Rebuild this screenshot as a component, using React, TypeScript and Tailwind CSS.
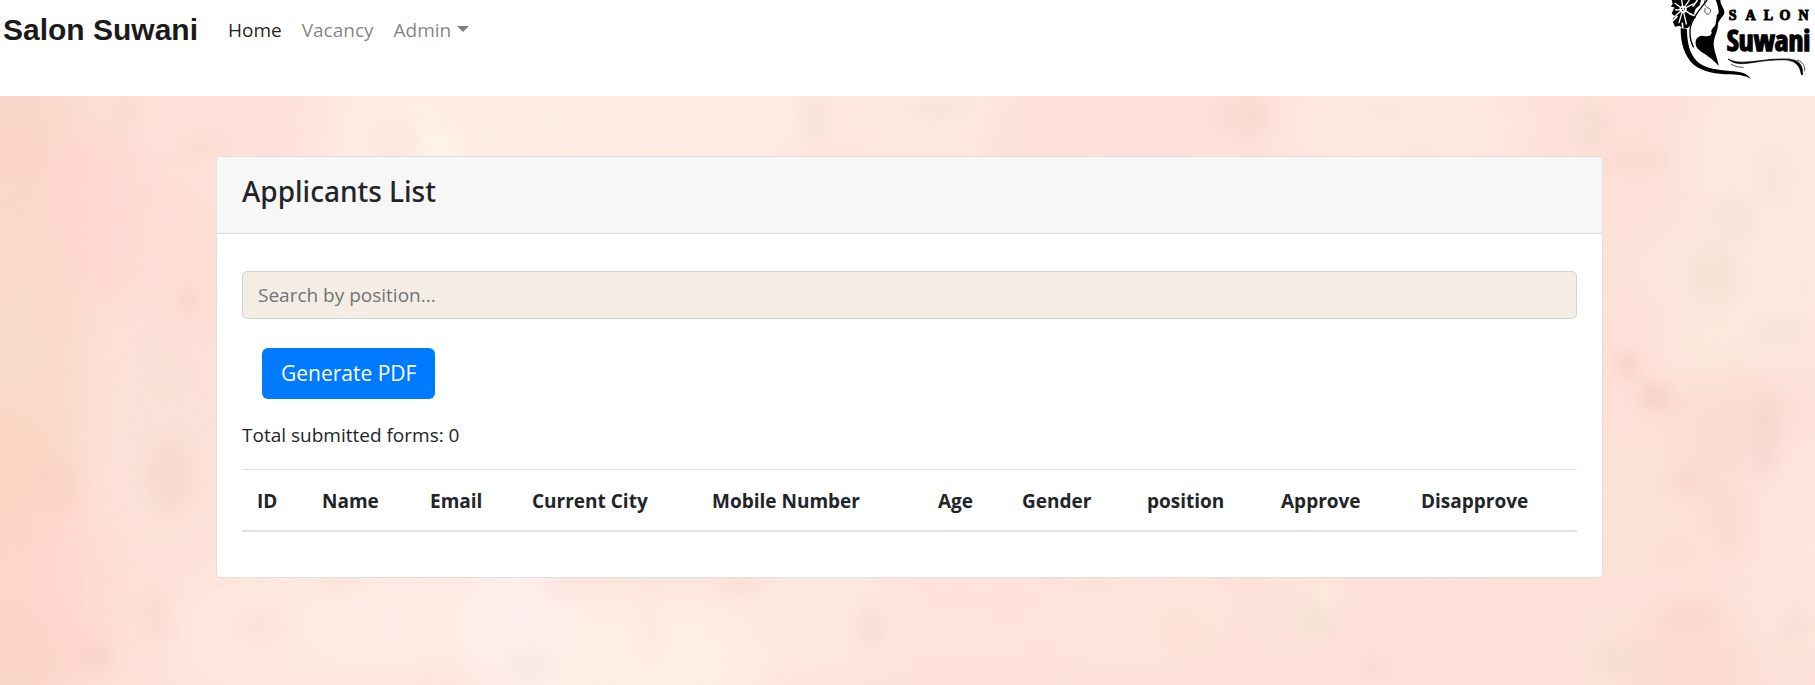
type Blob = [x: number, y: number, rx: number, ry: number, color: string, opacity: number];

const washes: Blob[] = [
  [0, 180, 90, 420, '#fad3c4', 0.7],
  [20, 260, 60, 130, '#fbd9c9', 0.9],
  [10, 400, 50, 90, '#fbd5c1', 0.8],
  [105, 120, 50, 90, '#ffd6d1', 0.8],
  [180, 180, 60, 120, '#ffdbd4', 0.7],
  [160, 330, 60, 120, '#fbe0d6', 0.9],
  [60, 500, 60, 100, '#ffd7d0', 0.8],
  [10, 570, 60, 60, '#f9d3c7', 0.8],
  [440, 40, 150, 70, '#ffefe6', 0.9],
  [640, 20, 190, 90, '#feece3', 0.9],
  [270, 30, 70, 60, '#ffe0db', 0.8],
  [920, 20, 90, 60, '#feeae0', 0.9],
  [1160, 30, 100, 60, '#ffdfda', 0.8],
  [1400, 30, 120, 60, '#feebe0', 0.9],
  [1640, 60, 60, 90, '#fddfd6', 0.8],
  [1770, 60, 90, 90, '#fdeae0', 0.9],
  [1720, 200, 90, 80, '#fbe8dd', 0.9],
  [1790, 150, 60, 140, '#fce9e0', 0.8],
  [1640, 320, 50, 130, '#ffded8', 0.8],
  [1720, 260, 60, 40, '#fce9dc', 0.9],
  [1740, 350, 90, 80, '#fbdbd2', 0.8],
  [1640, 400, 50, 80, '#fde2d7', 0.8],
  [1800, 420, 50, 90, '#ffe5e0', 0.9],
  [300, 540, 130, 80, '#fee9e0', 0.9],
  [420, 520, 120, 60, '#ffeee6', 0.8],
  [530, 540, 60, 90, '#fff0f0', 0.9],
  [660, 560, 120, 70, '#ffefe6', 0.9],
  [820, 520, 90, 60, '#fdeae1', 0.9],
  [980, 540, 110, 70, '#ffe3dc', 0.8],
  [1140, 510, 90, 50, '#fee6db', 0.9],
  [1320, 520, 50, 50, '#fbe7dc', 0.9],
  [1440, 550, 150, 70, '#ffe0d9', 0.8],
  [1620, 560, 50, 40, '#f9e3d7', 0.7],
  [1690, 570, 70, 50, '#fdd7cf', 0.8],
  [1790, 520, 50, 50, '#fce7dc', 0.9],
];

const specks: Blob[] = [
  [125, 14, 14, 16, '#f0cdbd', 0.3],
  [205, 50, 26, 10, '#f5cfc3', 0.3],
  [188, 205, 9, 12, '#f0bfb4', 0.4],
  [20, 60, 18, 12, '#f7cbbd', 0.3],
  [60, 390, 20, 22, '#f5c9ba', 0.3],
  [170, 380, 20, 34, '#f0cfc2', 0.4],
  [95, 560, 18, 16, '#efc3bd', 0.3],
  [155, 520, 16, 26, '#f7cdc2', 0.3],
  [392, 44, 26, 26, '#f5ddd2', 0.3],
  [440, 50, 20, 12, '#fff8ee', 0.6],
  [815, 24, 10, 24, '#ecd6ca', 0.4],
  [940, 14, 30, 8, '#efdccd', 0.5],
  [1005, 40, 14, 30, '#f5e0d3', 0.4],
  [1245, 20, 24, 20, '#f3cfc6', 0.4],
  [1385, 14, 20, 10, '#f0e0d3', 0.4],
  [1590, 30, 18, 22, '#f0dccf', 0.4],
  [1420, 56, 16, 8, '#f0d8cc', 0.3],
  [1640, 64, 28, 8, '#f6cdc3', 0.4],
  [1735, 120, 20, 26, '#efdccf', 0.4],
  [1715, 180, 24, 30, '#f0ddd0', 0.5],
  [1775, 80, 14, 34, '#f1dfd3', 0.4],
  [1628, 270, 12, 14, '#f2c6bd', 0.5],
  [1655, 300, 16, 14, '#f2c3b9', 0.5],
  [1780, 235, 30, 14, '#f0dccf', 0.3],
  [1765, 340, 14, 40, '#f1cec2', 0.4],
  [1685, 385, 18, 10, '#f5cbc1', 0.4],
  [1730, 430, 20, 30, '#f5d3c7', 0.3],
  [1675, 456, 18, 6, '#efcdc3', 0.4],
  [1690, 520, 30, 18, '#f7cbc0', 0.3],
  [1795, 530, 12, 20, '#efd8ca', 0.4],
  [340, 488, 24, 8, '#f4d9ce', 0.4],
  [260, 530, 22, 18, '#f5dccf', 0.3],
  [560, 490, 20, 10, '#f5ddd3', 0.4],
  [740, 488, 22, 10, '#f2d8cb', 0.4],
  [870, 530, 12, 24, '#f1d3c7', 0.4],
  [650, 520, 8, 40, '#f8e0d6', 0.4],
  [530, 568, 26, 18, '#f5e2dc', 0.4],
  [1095, 486, 24, 8, '#f2ddcf', 0.4],
  [1315, 524, 24, 20, '#f0dfcf', 0.5],
  [1325, 496, 8, 18, '#fdf1de', 0.7],
  [1180, 530, 20, 14, '#f7d5ca', 0.3],
  [1375, 572, 12, 10, '#f3cfc4', 0.4],
  [1620, 562, 26, 12, '#efe0c9', 0.5],
];

function Watercolor() {
  return (
    <svg
      aria-hidden="true"
      className="absolute inset-0 -z-10 h-full w-full"
      viewBox="0 0 1815 589"
      preserveAspectRatio="none"
    >
      <defs>
        <filter id="wash" x="-50%" y="-50%" width="200%" height="200%">
          <feGaussianBlur stdDeviation="22" />
        </filter>
        <filter id="speck" x="-50%" y="-50%" width="200%" height="200%">
          <feGaussianBlur stdDeviation="8" />
        </filter>
      </defs>
      <rect width="1815" height="589" fill="#fee2d9" />
      <g filter="url(#wash)">
        {washes.map(([x, y, rx, ry, color, opacity], i) => (
          <ellipse key={i} cx={x} cy={y} rx={rx} ry={ry} fill={color} opacity={opacity} />
        ))}
      </g>
      <g filter="url(#speck)">
        {specks.map(([x, y, rx, ry, color, opacity], i) => (
          <ellipse key={i} cx={x} cy={y} rx={rx} ry={ry} fill={color} opacity={opacity} />
        ))}
      </g>
    </svg>
  );
}

function Logo() {
  return (
    <svg viewBox="0 0 480 288" className="h-24 w-40 shrink-0" role="img" aria-label="Salon Suwani">
      {/* flower */}
      <path
        d="M50 0 L53 12 L47 20 L56 28 L50 40 L58 48 L52 62 L60 80 L74 77 L84 86 L98 84 L108 74 L112 60 L124 52 L117 40 L122 26 L134 16 L138 0 Z"
        fill="#000"
      />
      <g stroke="#fff" strokeLinecap="round" fill="none">
        <path strokeWidth="4" d="M84 28 L60 10 M84 28 L58 50 M84 28 L72 68 M84 28 L94 72 M84 28 L110 44 M84 28 L114 12 M84 28 L80 0 M84 28 L102 2 M84 28 L62 30" />
        <path strokeWidth="5" d="M50 66 L66 50 M84 88 L82 70 M122 48 L106 42 M46 22 L56 24 M114 18 L126 2" />
      </g>
      <circle cx="84" cy="28" r="11" fill="#fff" />
      <g fill="#000">
        <circle cx="80" cy="25" r="2" />
        <circle cx="88" cy="27" r="2" />
        <circle cx="83" cy="32" r="2" />
      </g>
      {/* outer lock of hair */}
      <path
        d="M77 84 C76 128 88 168 116 194 C144 216 184 222 226 223 C254 224 272 228 287 236 C276 220 258 215 226 213 C186 210 150 206 126 184 C104 162 96 128 96 88 Z"
        fill="#000"
      />
      {/* inner strands */}
      <path d="M156 0 C142 20 112 50 106 82 C103 104 107 126 116 142" stroke="#000" strokeWidth="4" fill="none" />
      <path d="M151 24 C146 36 153 44 160 42 C169 38 169 26 160 24 C150 20 146 10 150 0" stroke="#000" strokeWidth="2" fill="none" />
      {/* face profile */}
      <path
        d="M182 0 C188 14 190 26 191 36 C191 44 184 44 185 50 C186 55 182 58 184 62 C180 66 184 70 181 75 C176 84 166 88 170 98 C168 108 160 110 146 108 C132 104 120 116 122 132 C124 156 160 160 191 198 C188 176 178 158 176 136 C175 112 188 96 189 76 C189 62 202 54 208 40 C210 26 196 16 196 0 Z"
        fill="#000"
      />
      {/* underline flourish */}
      <path d="M219 177 C250 204 290 184 350 181 C392 178 432 174 439 224 L443 224 C444 176 416 174 350 178 C290 184 250 194 219 177 Z" fill="#000" stroke="#000" strokeWidth="2" />
      <path d="M426 180 C446 186 450 200 449 214 M228 192 C240 200 252 202 266 202" stroke="#000" strokeWidth="2" fill="none" />
      <g
        fontFamily="'Liberation Serif', serif"
        fontWeight="700"
        fontSize="42"
        textAnchor="middle"
        fill="#000"
        stroke="#000"
        strokeWidth="3"
      >
        <text x="233" y="60">S</text>
        <text x="287" y="60">A</text>
        <text x="340" y="60">L</text>
        <text x="390" y="60">O</text>
        <text x="446" y="60">N</text>
      </g>
      <text
        x="215"
        y="152"
        fontFamily="'Open Sans Condensed', 'Open Sans', sans-serif"
        fontWeight="700"
        fontSize="88"
        stroke="#000"
        strokeWidth="4"
        fill="#000"
      >
        Suwani
      </text>
    </svg>
  );
}

const columns = [
  { label: 'ID', width: 'w-[65px]' },
  { label: 'Name', width: 'w-[108px]' },
  { label: 'Email', width: 'w-[102px]' },
  { label: 'Current City', width: 'w-[180px]' },
  { label: 'Mobile Number', width: 'w-[226px]' },
  { label: 'Age', width: 'w-[84px]' },
  { label: 'Gender', width: 'w-[125px]' },
  { label: 'position', width: 'w-[134px]' },
  { label: 'Approve', width: 'w-[140px]' },
  { label: 'Disapprove', width: 'w-[171px]' },
];

export default function App() {
  return (
    <div className="flex min-h-screen flex-col bg-white font-['Open_Sans',sans-serif] text-[19px] leading-[30px] text-[#212529]">
      <header className="flex h-24 items-start justify-between">
        <nav className="flex items-center pt-2 pl-[3px]">
          <a
            href="#"
            className="mr-5 font-['Liberation_Sans',Arial,sans-serif] text-[30px] leading-[44px] font-bold text-[#1a1a1a]"
          >
            Salon Suwani
          </a>
          <a href="#" className="px-[10px] text-black/90">
            Home
          </a>
          <a href="#" className="px-[10px] text-black/50">
            Vacancy
          </a>
          <button type="button" className="flex items-center gap-[6px] px-[10px] text-black/50">
            Admin
            <svg viewBox="0 0 12 6" className="mb-[2px] h-[6px] w-3" aria-hidden="true">
              <path d="M0 0h12L6 6z" fill="currentColor" />
            </svg>
          </button>
        </nav>
        <Logo />
      </header>

      <main className="relative isolate flex-1 pt-[60px] pr-[212px] pb-10 pl-[216px]">
        <Watercolor />
        <section className="mx-auto max-w-[1387px] rounded-[5px] border border-[#dfdfdf] bg-white">
          <div className="rounded-t-[4px] border-b border-[#d8d8d8] bg-[#f7f7f7] px-[25px] pt-4 pb-6">
            <h1 className="font-['Noto_Sans',sans-serif] text-[28px] leading-9 font-medium">Applicants List</h1>
          </div>
          <div className="px-[25px] pt-[37px] pb-[45px]">
            <input
              type="text"
              aria-label="Search by position"
              placeholder="Search by position..."
              className="block h-12 w-full rounded-[5px] border border-[#ced4da] bg-[#f5ede3] px-[15px] placeholder:text-[#6c757d]"
            />
            <button
              type="button"
              className="mt-[29px] ml-5 block rounded-md bg-[#007bff] px-[19px] py-[10px] text-[21px] leading-[31px] text-white"
            >
              Generate PDF
            </button>
            <p className="mt-[21px] mb-[19px]">Total submitted forms: 0</p>
            <table className="w-full table-fixed border-collapse text-left">
              <thead>
                <tr className="border-t border-b-2 border-[#dee2e6]">
                  {columns.map((c) => (
                    <th key={c.label} scope="col" className={`${c.width} pt-4 pb-[14px] pl-[15px] font-bold whitespace-nowrap`}>
                      {c.label}
                    </th>
                  ))}
                </tr>
              </thead>
              <tbody />
            </table>
          </div>
        </section>
      </main>
    </div>
  );
}
